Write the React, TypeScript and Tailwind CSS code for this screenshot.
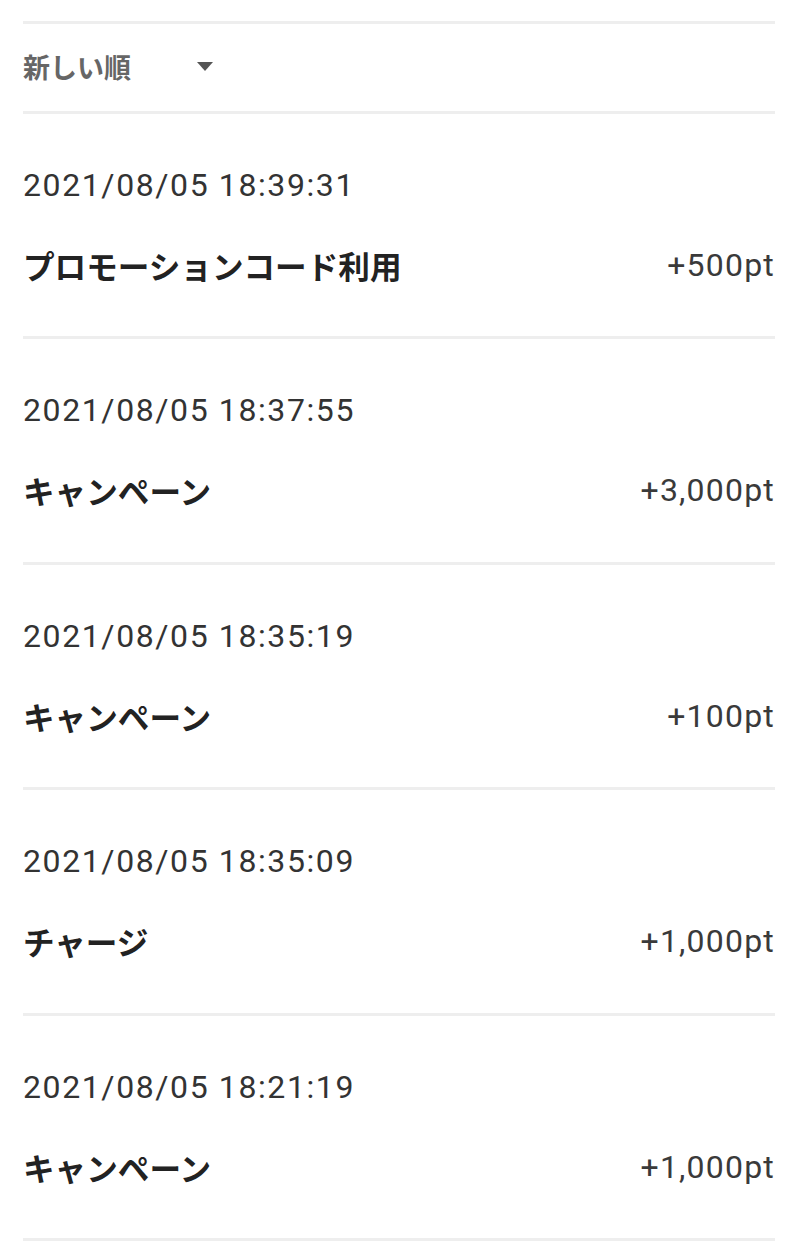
import React from 'react';

type Entry = {
  date: string;
  title: string;
  amount: string;
};

const entries: Entry[] = [
  { date: '2021/08/05 18:39:31', title: 'プロモーションコード利用', amount: '+500pt' },
  { date: '2021/08/05 18:37:55', title: 'キャンペーン', amount: '+3,000pt' },
  { date: '2021/08/05 18:35:19', title: 'キャンペーン', amount: '+100pt' },
  { date: '2021/08/05 18:35:09', title: 'チャージ', amount: '+1,000pt' },
  { date: '2021/08/05 18:21:19', title: 'キャンペーン', amount: '+1,000pt' },
];

const latin = { fontFamily: 'Roboto, "Noto Sans CJK JP", sans-serif' };
const jp = { fontFamily: '"Noto Sans CJK JP", "Noto Sans", sans-serif' };

const HistoryRow: React.FC<{ entry: Entry }> = ({ entry }) => (
  <li className="border-b-[3px] border-[#eeeeee] pt-[51px] pb-[51.4px]">
    <div className="text-[32px] leading-[40px] tracking-[1.6px] text-[#333333]" style={latin}>
      {entry.date}
    </div>
    <div className="mt-[40px] flex items-center justify-between">
      <span className="text-[31.6px] leading-[40px] font-bold text-[#222222]" style={jp}>
        {entry.title}
      </span>
      <span className="text-[32px] leading-[40px] tracking-[1.2px] text-[#3a3a3a]" style={latin}>
        {entry.amount}
      </span>
    </div>
  </li>
);

const App: React.FC = () => {
  return (
    <div className="min-h-screen bg-white pt-[21px] pl-[23px] pr-[22px]">
      {/* Sort selector */}
      <div className="border-y-[3px] border-[#eeeeee] h-[93px] flex items-center">
        <span className="text-[27px] font-bold text-[#666666] w-[174px]" style={jp}>
          新しい順
        </span>
        <svg width="16" height="9" viewBox="0 0 16 9" className="-mt-[2px]">
          <path d="M0 0 L16 0 L8 9 Z" fill="#555555" />
        </svg>
      </div>

      {/* History list */}
      <ul>
        {entries.map((e, i) => (
          <HistoryRow key={i} entry={e} />
        ))}
      </ul>
    </div>
  );
};

export default App;
